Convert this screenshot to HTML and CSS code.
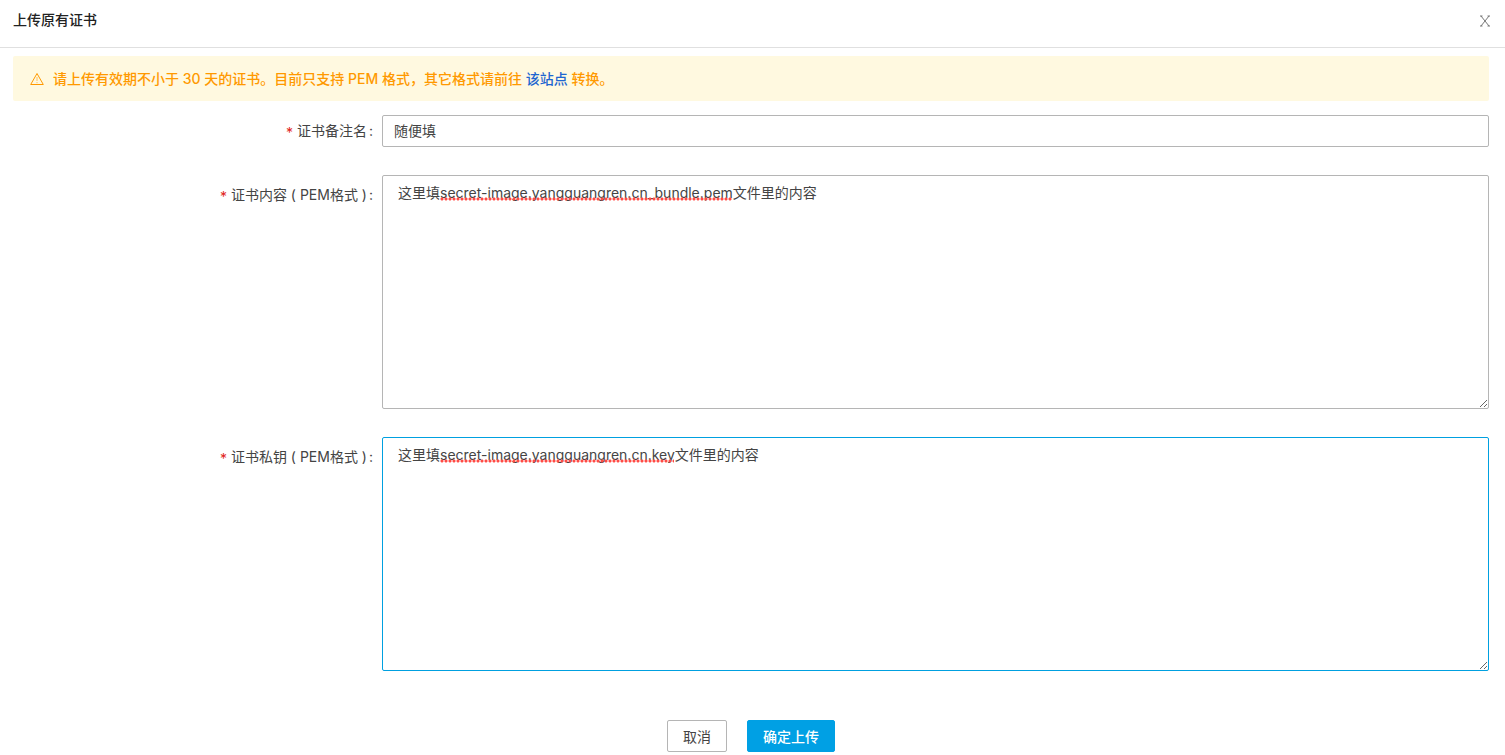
FILE: index.html
```html
<!DOCTYPE html>
<html lang="zh-CN">
<head>
<meta charset="utf-8">
<meta name="viewport" content="width=device-width, initial-scale=1">
<title>上传原有证书</title>
<link rel="stylesheet" href="styles.css">
</head>
<body>
<main class="dialog">
  <header class="dialog-header">
    <h1 class="dialog-title">上传原有证书</h1>
    <button class="close" type="button" aria-label="关闭">
      <svg class="close-icon" viewBox="0 0 12 12" aria-hidden="true"><path d="M2 1 10 11M10 1 2 11M1 1H3.500M8.500 1H11M1 11h2.500M8.500 11H11"/></svg>
    </button>
  </header>
  <div class="dialog-body">
    <div class="alert" role="alert">
      <svg class="alert-icon" viewBox="0 0 14 14" aria-hidden="true"><path d="M7 1.500 13.300 12.500H.7Z"/><path class="alert-mark" d="M7 5v4M7 10v1.200"/></svg>
      <p class="alert-text">请上传有效期不小于 30 天的证书。目前只支持 PEM 格式，其它格式请前往 <a class="link" href="#">该站点</a> 转换。</p>
    </div>
    <form class="form">
      <div class="row">
        <label class="label" for="name"><span class="required">*</span>证书备注名<span class="colon">:</span></label>
        <input class="control input" id="name" type="text" value="随便填">
      </div>
      <div class="row">
        <label class="label" for="cert"><span class="required">*</span>证书内容 ( PEM格式 )<span class="colon">:</span></label>
        <div class="field">
          <textarea class="control textarea" id="cert" spellcheck="false">这里填secret-image.yangguangren.cn_bundle.pem文件里的内容</textarea>
          <span class="squiggle squiggle-bundle"></span>
        </div>
      </div>
      <div class="row">
        <label class="label" for="key"><span class="required">*</span>证书私钥 ( PEM格式 )<span class="colon">:</span></label>
        <div class="field">
          <textarea class="control textarea active" id="key" spellcheck="false">这里填secret-image.yangguangren.cn.key文件里的内容</textarea>
          <span class="squiggle squiggle-key"></span>
        </div>
      </div>
      <div class="actions">
        <button class="button" type="button">取消</button>
        <button class="button primary" type="submit">确定上传</button>
      </div>
    </form>
  </div>
</main>
</body>
</html>
```
FILE: styles.css
```css
* {
  box-sizing: border-box;
}

body {
  margin: 0;
  background: #fff;
  color: #444;
  font: 14px/20px Inter, "Noto Sans CJK SC", sans-serif;
}

.dialog-header {
  display: flex;
  align-items: flex-start;
  justify-content: space-between;
  min-height: 48px;
  padding: 10px 14px 0 13px;
  border-bottom: 1px solid #e0e0e0;
}

.dialog-title {
  margin: 0;
  color: #222;
  font-size: 14px;
  font-weight: 500;
}

.close {
  display: flex;
  padding: 5px 0;
  border: 0;
  background: none;
}

.close-icon {
  width: 12px;
  height: 12px;
  fill: none;
  stroke: #777;
}

.dialog-body {
  padding: 8px 16px 3px 13px;
}

.alert {
  display: flex;
  align-items: center;
  gap: 9px;
  min-height: 45px;
  padding: 0 17px;
  border-radius: 2px;
  background: #fff9e0;
  color: #ff9900;
}

.alert-icon {
  width: 14px;
  height: 14px;
  fill: none;
  stroke: #ff9900;
}

.alert-mark {
  opacity: 0.6;
}

.alert-text {
  margin: 0;
  font-weight: 500;
}

.link {
  color: #1e66d0;
  text-decoration: none;
}

.form {
  display: grid;
  gap: 28px;
  padding-top: 14px;
}

.row {
  display: grid;
  grid-template-columns: 1fr 3fr;
}

.label {
  padding: 6px 9px 0 0;
  text-align: right;
}

.row:not(:first-child) .label {
  padding-top: 10px;
}

.required {
  margin-right: 4px;
  color: #e1251b;
  line-height: 1;
  vertical-align: -2px;
}

.colon {
  margin-left: 2px;
}

.field {
  position: relative;
  display: flex;
}

.control {
  width: 100%;
  margin: 0;
  border: 1px solid #b5b5b5;
  border-radius: 2px;
  outline: 0;
  background: #fff;
  color: #444;
  font: inherit;
}

.input {
  height: 32px;
  padding: 0 11px 2px;
}

.textarea {
  height: 234px;
  padding: 7px 15px;
}

.active {
  border-color: #00a0e0;
}

.squiggle {
  position: absolute;
  top: 22px;
  left: 58px;
  height: 4px;
  background: radial-gradient(circle, #ff4b45 1px, transparent 2px) 0 0 / 4px 4px;
  pointer-events: none;
}

.squiggle-bundle {
  width: 292px;
}

.squiggle-key {
  width: 234px;
}

.actions {
  display: flex;
  justify-content: center;
  gap: 20px;
  padding-top: 21px;
}

.button {
  height: 32px;
  padding: 2px 15px 0;
  border: 1px solid #b5b5b5;
  border-radius: 2px;
  background: #fff;
  color: #444;
  font: inherit;
}

.primary {
  border-color: #00a0e4;
  background: #00a0e4;
  color: #fff;
  font-weight: 500;
}
```
